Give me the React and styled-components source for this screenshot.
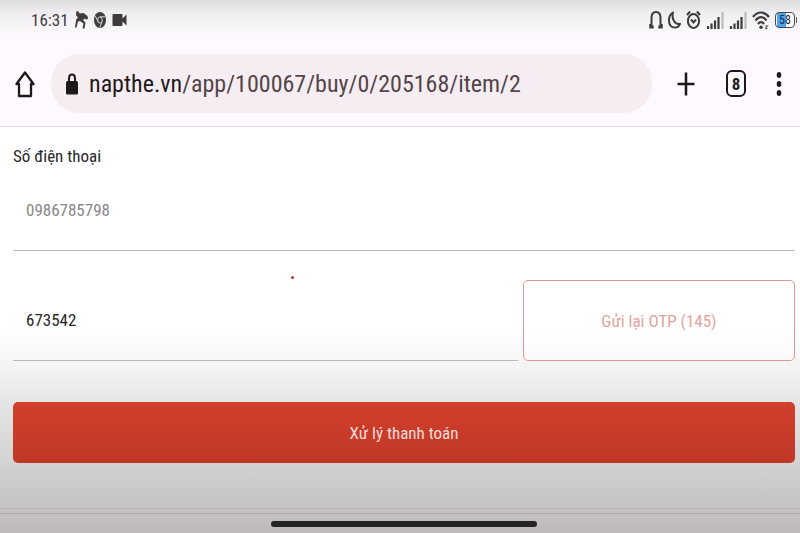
import { useState } from "react";
import styled, { createGlobalStyle } from "styled-components";


const GlobalStyle = createGlobalStyle`
    * {
        box-sizing: border-box;
    }

    body {
        margin: 0;
        background: #ffffff;
        color: #2a2828;
        font-family: "Roboto Condensed", "Liberation Sans Narrow", Roboto, sans-serif;
    }

    button, input {
        font: inherit;
        color: inherit;
    }
`

const Screen = styled.div`
    display: flex;
    flex-direction: column;
    min-height: 100vh;
    background: linear-gradient(to bottom, #ffffff 62%, #f4f4f4 69%, #e6e6e6 75%, #d2d2d2 87%, #c4c4c4 95%, #bdbabd 100%);
`

const Header = styled.header`
    background: linear-gradient(to bottom, #dedbde 0, #f0edf0 12px, #fdf9fe 36px);
    border-bottom: 1px solid #e5dfe2;
`

const StatusBar = styled.div`
    display: flex;
    justify-content: space-between;
    align-items: center;
    height: 40px;
    padding: 0 3px 0 31px;
    color: #3f3b3f;
    font-size: 17px;
`

const StatusGroup = styled.div`
    display: flex;
    align-items: center;
    gap: ${({ $gap }) => $gap}px;
`

const Glyph = styled.svg`
    display: block;
    flex: none;
    width: ${({ $w }) => $w}px;
    height: ${({ $h }) => $h || 20}px;
    fill: none;
    stroke: currentColor;
    stroke-width: 2;
`

const Toolbar = styled.nav`
    display: flex;
    align-items: center;
    gap: 16px;
    padding: 14px 18px 13px 15px;
    color: #1c191b;
`

const Address = styled.div`
    display: flex;
    flex: 1;
    align-items: center;
    gap: 11px;
    min-width: 0;
    height: 59px;
    padding: 0 15px;
    border-radius: 28px;
    background: #f6edf2;
`

const Url = styled.div`
    overflow: hidden;
    white-space: nowrap;
    font-size: 24px;
    line-height: 40px;
    color: #524649;

    b {
        font-weight: 400;
        color: #1f1a1c;
    }
`

const Tools = styled.div`
    display: flex;
    align-items: center;
    gap: 30px;
    padding-left: 8px;
`

const IconButton = styled.button`
    display: grid;
    place-items: center;
    padding: 0;
    border: 0;
    background: none;
    cursor: pointer;
`

const TabCount = styled(IconButton)`
    width: 20px;
    height: 27px;
    border: 2px solid #1c191b;
    border-radius: 6px;
    font-size: 17px;
    font-weight: 700;
    line-height: 20px;
`

const Form = styled.form`
    position: relative;
    flex: 1;
    padding: 15px 5px 44px 13px;
    font-size: 17px;
`

const Label = styled.label`
    display: block;
    line-height: 28px;
`

const Field = styled.input`
    display: block;
    flex: 1;
    width: 100%;
    min-width: 0;
    height: 81px;
    padding: 0 13px;
    border: 0;
    border-bottom: 1px solid #b9b9b9;
    border-radius: 0;
    outline: 0;
    background: transparent;

    &:disabled {
        color: #888888;
    }
`

const OtpRow = styled.div`
    display: flex;
    gap: 5px;
    margin: 29px 0 41px;
`

const Resend = styled.button`
    flex: 0 0 34.8%;
    border: 1px solid #dd9a92;
    border-radius: 5px;
    background: linear-gradient(to bottom, #ffffff 60%, #f9f9f9);
    color: #e0a49d;
`

const Submit = styled.button`
    display: block;
    width: 100%;
    height: 61px;
    border: 0;
    border-radius: 5px;
    background: linear-gradient(to bottom, #d23f2b, #bf3727);
    color: #f3dcd8;
    cursor: pointer;
`

const Pointer = styled.span`
    position: absolute;
    top: 149px;
    left: 291px;
    width: 3px;
    height: 3px;
    border-radius: 50%;
    background: #c9302f;
`

const BottomBar = styled.footer`
    height: 25px;
    padding: 0 5px 0 13px;
    border-top: 1px solid #bab3b5;
    background: linear-gradient(to bottom, #c5c1c5, #bcb8bc);

    &::before {
        content: '';
        display: block;
        height: 4px;
        margin: 0 -5px 7px -13px;
        border-bottom: 1px solid #b8a6a5;
    }
`

const Handle = styled.div`
    width: 34%;
    height: 6px;
    margin: 0 auto;
    border-radius: 3px;
    background: #242224;
`


function Signal() {
    return (
        <Glyph $w={18} viewBox="0 0 18 20">
            <path d="M2 16v3M5.500 13.500V19M9 10.500V19M12.500 7v12" strokeWidth="2.200" />
            <path d="M16.500 2v17" stroke="#bab6ba" />
        </Glyph>
    );
}

function StatusIcons() {
    return (
        <StatusGroup $gap={5}>
            <Glyph $w={14} viewBox="0 0 14 20">
                <path d="M2.500 17V8C2.500 3.800 4.500 2 7 2s4.500 1.800 4.500 6v9" />
                <path d="M1.200 14v3.500h2.500v-2M12.800 14v3.500h-2.500v-2" />
            </Glyph>
            <Glyph $w={13} viewBox="0 0 13 20">
                <path d="M5 2.500C2.500 4 1 6.800 1 10.200 1 15 3.600 17.500 7 17.500c2.300 0 4.200-1.200 5-3.500C7 15 3.300 9 5 2.500z" strokeLinejoin="round" />
            </Glyph>
            <Glyph $w={15} viewBox="0 0 15 20">
                <ellipse cx="7.500" cy="11" rx="5.600" ry="7" />
                <path d="M5 9.500l2.500 3 2.500-3M1 5l3-3.500M14 5l-3-3.500" />
            </Glyph>
            <Signal />
            <Signal />
            <Glyph $w={18} viewBox="0 0 18 20">
                <path d="M1 7C5.500 1 12.500 1 17 7M3.500 10.500c3.200-4.500 7.800-4.500 11 0M6 14c1.800-2.600 4.200-2.600 6 0" strokeWidth="2.200" />
                <circle cx="9" cy="17.300" r="1.700" fill="currentColor" stroke="none" />
                <path d="M13 18.500l3-3M13.500 16h2M13.500 18.500h2" strokeWidth="1" />
            </Glyph>
            <Battery>
                <BatteryLevel>58</BatteryLevel>
            </Battery>
        </StatusGroup>
    );
}

const Battery = styled.div`
    display: flex;
    align-items: center;
    width: 22px;

    &::after {
        content: '';
        width: 1px;
        height: 6px;
        margin-left: 1px;
        background: #5b575b;
    }
`

const BatteryLevel = styled.span`
    flex: 1;
    height: 16px;
    border: 1px solid #4b484b;
    border-radius: 4px;
    background: linear-gradient(to right, #ffffff 1px, #4aa3f5 1px 58%, #ffffff 58%);
    font-size: 12px;
    line-height: 14px;
    text-align: center;
    color: #1d2a3a;
`


function App() {
    const [otp, setOtp] = useState("673542");

    return (
        <>
            <GlobalStyle />
            <Screen>
                <Header>
                    <StatusBar>
                        <StatusGroup $gap={6}>
                            <span>16:31</span>
                            <Glyph $w={13} viewBox="0 0 13 20">
                                <path d="M1.500 1l2 0.500 1 2 4-0.500 4 3 0.500 3-2 0.500-1.500-1-1.500 1.500 2.500 2.500-1 6H7.500l1-5-3.500-2.500-2 0.500-1.500 6H0l1.200-8L3 7.500 1 5z" fill="currentColor" stroke="none" />
                            </Glyph>
                            <Glyph $w={12} viewBox="0 0 12 20">
                                <ellipse cx="6" cy="10" rx="6" ry="8" fill="currentColor" stroke="none" />
                                <g stroke="#d8d5d8" strokeWidth="1">
                                    <ellipse cx="6" cy="10" rx="2.300" ry="3.200" />
                                    <path d="M6 6.800h5M4 11.500L1.300 6M8 11.500L5.800 17.500" />
                                </g>
                            </Glyph>
                            <Glyph $w={15} viewBox="0 0 15 20">
                                <path d="M1.500 4h8q1 0 1 1v3.500l4-4v11l-4-4V15q0 1-1 1h-8q-1 0-1-1V5q0-1 1-1z" fill="currentColor" stroke="none" />
                            </Glyph>
                        </StatusGroup>
                        <StatusIcons />
                    </StatusBar>
                    <Toolbar>
                        <IconButton aria-label="Home">
                            <Glyph $w={20} $h={28} viewBox="0 0 20 28">
                                <path d="M1.500 14L10 2.500 18.500 14H16v12H4V14z" strokeWidth="2.300" strokeLinejoin="round" />
                            </Glyph>
                        </IconButton>
                        <Address>
                            <Glyph $w={12} $h={22} viewBox="0 0 12 22">
                                <path d="M3 10V5.500C3 3 4.300 1.500 6 1.500S9 3 9 5.500V10" />
                                <rect y="8" width="12" height="13.500" rx="1.500" fill="currentColor" stroke="none" />
                            </Glyph>
                            <Url><b>napthe.vn</b>/app/100067/buy/0/205168/item/2</Url>
                        </Address>
                        <Tools>
                            <IconButton aria-label="New tab">
                                <Glyph $w={20} $h={28} viewBox="0 0 20 28">
                                    <path d="M10 2.500v23M1.500 14h17" strokeWidth="2.500" />
                                </Glyph>
                            </IconButton>
                            <TabCount>8</TabCount>
                            <IconButton aria-label="Menu">
                                <Glyph $w={6} $h={28} viewBox="0 0 6 28">
                                    <g fill="currentColor" stroke="none">
                                        <ellipse cx="3" cy="5" rx="2.300" ry="3" />
                                        <ellipse cx="3" cy="14" rx="2.300" ry="3" />
                                        <ellipse cx="3" cy="23" rx="2.300" ry="3" />
                                    </g>
                                </Glyph>
                            </IconButton>
                        </Tools>
                    </Toolbar>
                </Header>

                <Form onSubmit={(e) => e.preventDefault()}>
                    <Label htmlFor="phone">Số điện thoại</Label>
                    <Field id="phone" type="tel" value="0986785798" disabled />
                    <OtpRow>
                        <Field aria-label="OTP" inputMode="numeric" value={otp} onChange={(e) => setOtp(e.target.value)} />
                        <Resend type="button" disabled>Gửi lại OTP (145)</Resend>
                    </OtpRow>
                    <Submit type="submit">Xử lý thanh toán</Submit>
                    <Pointer />
                </Form>

                <BottomBar>
                    <Handle />
                </BottomBar>
            </Screen>
        </>
    );
}


export default App;
